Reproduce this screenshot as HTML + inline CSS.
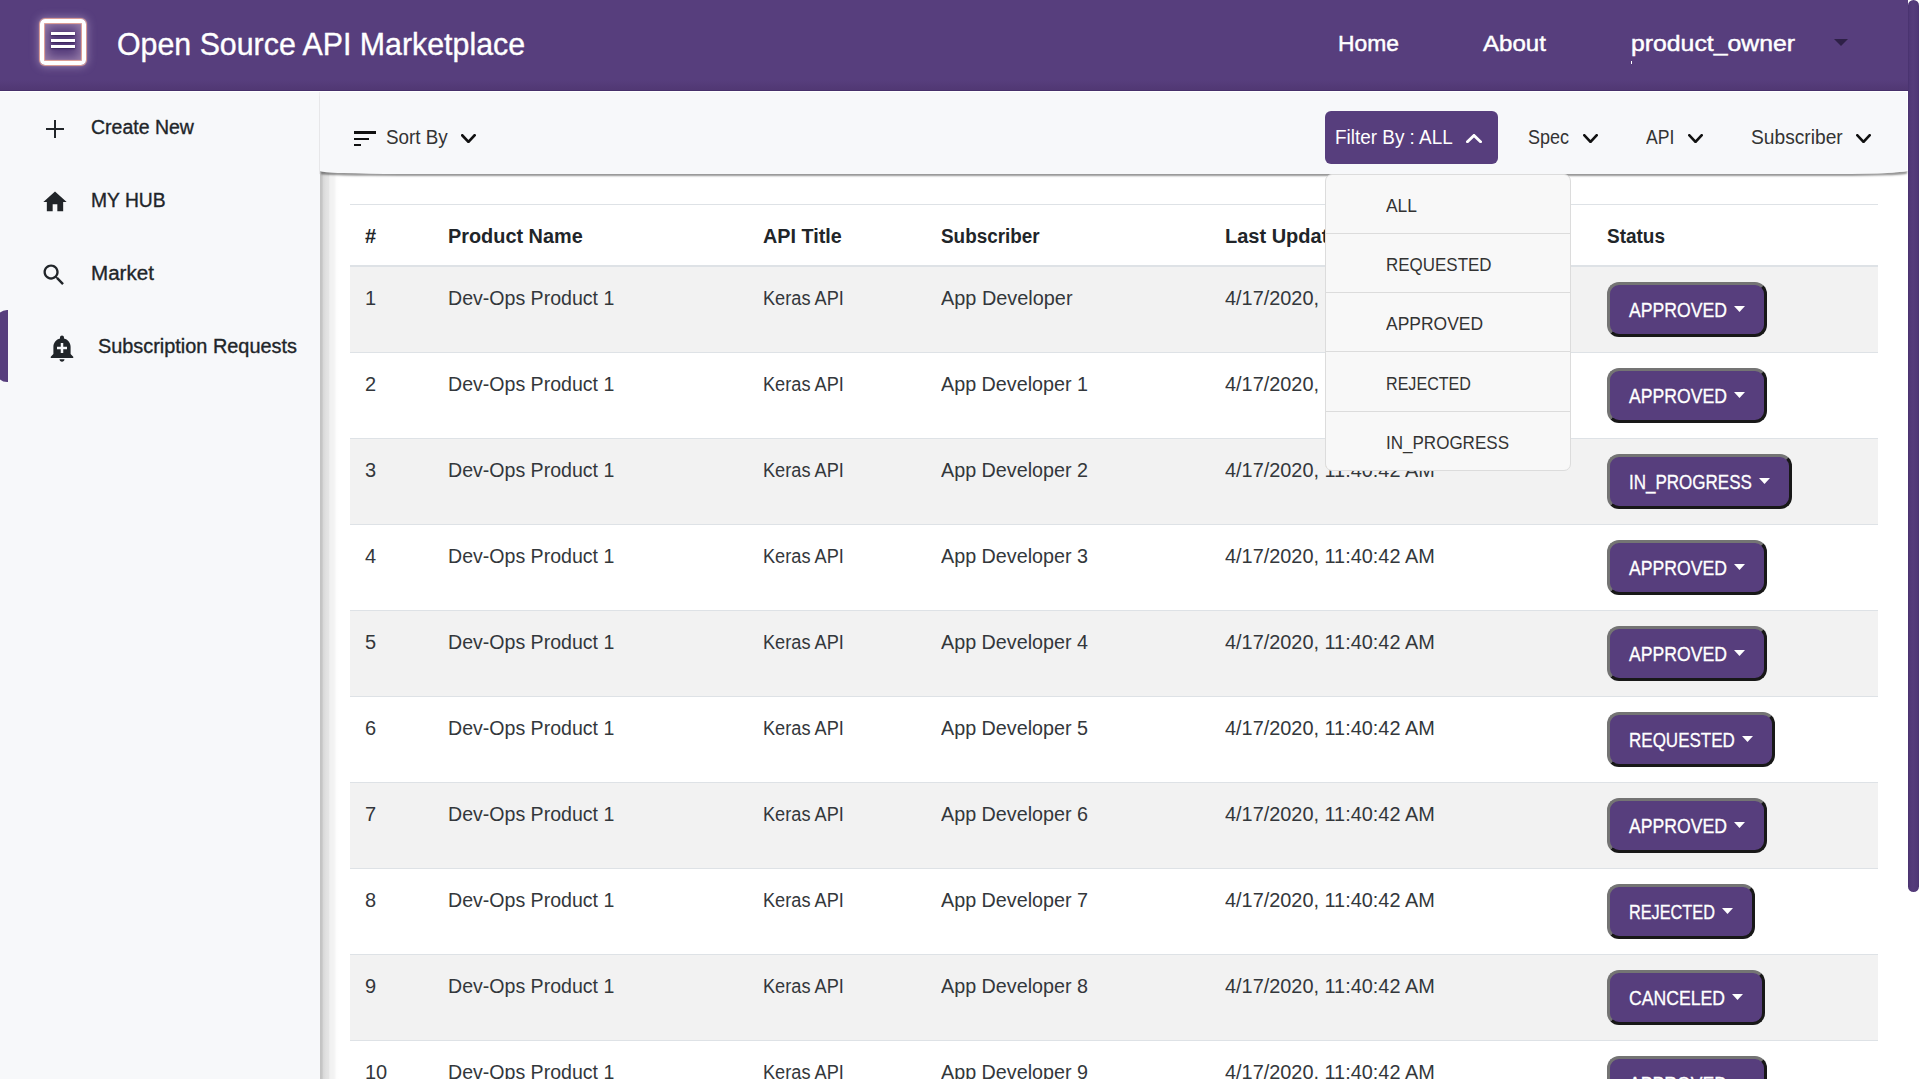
<!DOCTYPE html>
<html><head><meta charset="utf-8"><title>Subscription Requests</title>
<style>
html,body{margin:0;padding:0;width:1919px;height:1079px;overflow:hidden;background:#fff}
body{position:relative;font-family:"Liberation Sans",sans-serif}
.a{position:absolute;box-sizing:content-box}
.t{position:absolute;white-space:nowrap;font-family:"Liberation Sans",sans-serif}
.btn{background:#573e7d;border:3px solid;border-color:#747474 #181818 #181818 #747474;border-radius:12px}
</style></head><body>
<div class="a" style="left:0px;top:0px;width:1919px;height:1079px;background:#ffffff"></div>
<div class="a" style="left:0px;top:90px;width:320px;height:989px;background:#f7f8fa"></div>
<div class="a" style="left:319px;top:92px;width:1px;height:82px;background:#ececee"></div>
<div class="a" style="left:320px;top:90px;width:1588px;height:1040px;background:#fff"></div>
<div class="a" style="left:320px;top:170px;width:19px;height:960px;background:linear-gradient(to right,#c2c2c2 0,#c6c6c6 2px,#d9d9d9 3.5px,#e1e1e1 6px,#e4e4e4 8.5px,#f1f1f1 10px,#f3f3f3 14px,#fdfdfd 16.5px,#fff 19px)"></div>
<div class="a" style="left:320px;top:92px;width:1587px;height:82px;background:#f7f8fa;border-right:1px solid #fff;border-radius:0 0 70px 80px / 0 0 3.5px 3px;box-shadow:0 3px 2px -1px rgba(0,0,0,0.42)"></div>
<div class="a" style="left:0px;top:0px;width:1908px;height:90px;background:linear-gradient(to bottom,#573e7d 0,#573e7d 80px,#513874 89px)"></div>
<div class="a" style="left:0px;top:90px;width:1908px;height:1px;background:#46306a"></div>
<div class="a" style="left:0px;top:91px;width:1908px;height:1px;background:#fff"></div>
<div class="a" style="left:1908px;top:0px;width:11px;height:892px;background:linear-gradient(to right,#45306a 0,#4f3776 1px,#553c7b 5px,#4f3776 10px,#49336e 11px);border-radius:5.5px"></div>
<div class="a" style="left:40px;top:19px;width:38px;height:38px;border:4px solid #fff;border-radius:5px;box-shadow:0 0 1px 1px rgba(255,180,150,0.8),0 0 8px 2px rgba(235,220,250,0.35), inset 0 0 1px 1px rgba(255,180,150,0.8), inset 0 0 11px 3px rgba(240,210,230,0.45)"></div>
<div class="a" style="left:51px;top:32px;width:24px;height:3px;background:#fff;box-shadow:0 1px 2px rgba(40,20,70,0.7)"></div>
<div class="a" style="left:51px;top:38.5px;width:24px;height:3px;background:#fff;box-shadow:0 1px 2px rgba(40,20,70,0.7)"></div>
<div class="a" style="left:51px;top:45px;width:24px;height:3px;background:#fff;box-shadow:0 1px 2px rgba(40,20,70,0.7)"></div>
<div class="t" style="left:116.50px;top:28.54px;font-size:31.5px;line-height:31.5px;color:#fff;transform:scaleX(0.9630);transform-origin:0 0;-webkit-text-stroke:0.35px #fff;">Open Source API Marketplace</div>
<div class="t" style="left:1337.50px;top:32.85px;font-size:22.5px;line-height:22.5px;color:#fff;transform:scaleX(1.0154);transform-origin:0 0;-webkit-text-stroke:0.45px #fff;">Home</div>
<div class="t" style="left:1483.00px;top:32.85px;font-size:22.5px;line-height:22.5px;color:#fff;transform:scaleX(1.0707);transform-origin:0 0;-webkit-text-stroke:0.45px #fff;">About</div>
<div class="t" style="left:1631.00px;top:32.95px;font-size:22.5px;line-height:22.5px;color:#fff;transform:scaleX(1.1019);transform-origin:0 0;-webkit-text-stroke:0.45px #fff;">product_owner</div>
<div class="a" style="left:1631px;top:61px;width:1px;height:3px;background:#fff"></div>
<svg class="a" style="left:1834px;top:39px" width="14" height="7" viewBox="0 0 14 7"><path d="M0,0 L14,0 L7,7 Z" fill="#2e2047"/></svg>
<div class="a" style="left:54px;top:120px;width:2px;height:18px;background:#212529"></div>
<div class="a" style="left:46px;top:128px;width:18px;height:2px;background:#212529"></div>
<div class="t" style="left:90.80px;top:116.87px;font-size:20px;line-height:20px;color:#212529;transform:scaleX(0.9745);transform-origin:0 0;-webkit-text-stroke:0.35px #212529;">Create New</div>
<svg class="a" style="left:41px;top:188px" width="28" height="28" viewBox="0 0 24 24"><path d="M10 20v-6h4v6h5v-8h3L12 3 2 12h3v8z" fill="#212529"/></svg>
<div class="t" style="left:91.00px;top:189.77px;font-size:20px;line-height:20px;color:#212529;transform:scaleX(0.9638);transform-origin:0 0;-webkit-text-stroke:0.35px #212529;">MY HUB</div>
<svg class="a" style="left:40px;top:261px" width="28" height="28" viewBox="0 0 24 24"><path d="M15.5 14h-.79l-.28-.27C15.41 12.59 16 11.11 16 9.5 16 5.91 13.09 3 9.5 3S3 5.91 3 9.5 5.91 16 9.5 16c1.61 0 3.09-.59 4.23-1.57l.27.28v.79l5 4.99L20.49 19l-4.99-5zm-6 0C7.01 14 5 11.99 5 9.5S7.01 5 9.5 5 14 7.01 14 9.5 11.99 14 9.5 14z" fill="#212529"/></svg>
<div class="t" style="left:91.00px;top:263.07px;font-size:20px;line-height:20px;color:#212529;transform:scaleX(1.0295);transform-origin:0 0;-webkit-text-stroke:0.35px #212529;">Market</div>
<div class="a" style="left:-5px;top:310px;width:13px;height:72px;background:#573e7d;border-radius:12px 0 0 12px / 14px 0 0 14px"></div>
<svg class="a" style="left:47px;top:333px" width="30" height="30" viewBox="0 0 24 24"><path d="M10.01 21.01c0 1.1.89 1.99 1.99 1.99s1.99-.89 1.99-1.99h-3.98zM18.88 16.82V11c0-3.25-2.25-5.97-5.29-6.69v-.72C13.59 2.71 12.88 2 12 2s-1.59.71-1.59 1.59v.72C7.37 5.03 5.12 7.75 5.12 11v5.82L3 18.94V20h18v-1.06l-2.12-2.12zM16 13.01h-3v3h-2v-3H8V11h3V8h2v3h3v2.01z" fill="#212529"/></svg>
<div class="t" style="left:97.80px;top:336.07px;font-size:20px;line-height:20px;color:#212529;transform:scaleX(0.9940);transform-origin:0 0;-webkit-text-stroke:0.35px #212529;">Subscription Requests</div>
<div class="a" style="left:353.8px;top:131px;width:22.5px;height:2.8px;background:#111"></div>
<div class="a" style="left:353.8px;top:137.6px;width:15px;height:2.6px;background:#111"></div>
<div class="a" style="left:353.8px;top:143.6px;width:7.5px;height:2.8px;background:#111"></div>
<div class="t" style="left:385.70px;top:127.27px;font-size:20px;line-height:20px;color:#333;transform:scaleX(0.9421);transform-origin:0 0;">Sort By</div>
<svg class="a" style="left:460.8px;top:134.3px" width="14.90" height="9.20" viewBox="0 0 14.90 9.20"><path d="M1.35,1.35 L7.45,7.85 L13.55,1.35" fill="none" stroke="#111" stroke-width="2.7" stroke-linecap="square" stroke-linejoin="miter"/></svg>
<div class="a" style="left:1325px;top:111px;width:173px;height:53px;background:#573e7d;border-radius:6px"></div>
<div class="t" style="left:1335.00px;top:127.17px;font-size:20px;line-height:20px;color:#fff;transform:scaleX(0.9454);transform-origin:0 0;">Filter By : ALL</div>
<svg class="a" style="left:1465.5px;top:134px" width="16.00" height="9.20" viewBox="0 0 16.00 9.20"><path d="M1.40,7.80 L8.00,1.40 L14.60,7.80" fill="none" stroke="#fff" stroke-width="2.8" stroke-linecap="square" stroke-linejoin="miter"/></svg>
<div class="t" style="left:1528.30px;top:127.17px;font-size:20px;line-height:20px;color:#333;transform:scaleX(0.8991);transform-origin:0 0;">Spec</div>
<svg class="a" style="left:1583.3px;top:134.3px" width="15.00" height="9.20" viewBox="0 0 15.00 9.20"><path d="M1.35,1.35 L7.50,7.85 L13.65,1.35" fill="none" stroke="#111" stroke-width="2.7" stroke-linecap="square" stroke-linejoin="miter"/></svg>
<div class="t" style="left:1646.00px;top:127.17px;font-size:20px;line-height:20px;color:#333;transform:scaleX(0.8789);transform-origin:0 0;">API</div>
<svg class="a" style="left:1688.3px;top:134.3px" width="15.00" height="9.20" viewBox="0 0 15.00 9.20"><path d="M1.35,1.35 L7.50,7.85 L13.65,1.35" fill="none" stroke="#111" stroke-width="2.7" stroke-linecap="square" stroke-linejoin="miter"/></svg>
<div class="t" style="left:1751.00px;top:127.17px;font-size:20px;line-height:20px;color:#333;transform:scaleX(0.9592);transform-origin:0 0;">Subscriber</div>
<svg class="a" style="left:1856px;top:134.3px" width="15.00" height="9.20" viewBox="0 0 15.00 9.20"><path d="M1.35,1.35 L7.50,7.85 L13.65,1.35" fill="none" stroke="#111" stroke-width="2.7" stroke-linecap="square" stroke-linejoin="miter"/></svg>
<div class="a" style="left:350px;top:204px;width:1528px;height:1px;background:#dee2e6"></div>
<div class="t" style="left:365.00px;top:226.37px;font-size:20px;line-height:20px;color:#212529;font-weight:bold;">#</div>
<div class="t" style="left:447.60px;top:226.37px;font-size:20px;line-height:20px;color:#212529;font-weight:bold;transform:scaleX(0.9934);transform-origin:0 0;">Product Name</div>
<div class="t" style="left:762.60px;top:226.37px;font-size:20px;line-height:20px;color:#212529;font-weight:bold;transform:scaleX(0.9887);transform-origin:0 0;">API Title</div>
<div class="t" style="left:941.20px;top:226.37px;font-size:20px;line-height:20px;color:#212529;font-weight:bold;transform:scaleX(0.9445);transform-origin:0 0;">Subscriber</div>
<div class="t" style="left:1225.00px;top:226.37px;font-size:20px;line-height:20px;color:#212529;font-weight:bold;">Last Updated</div>
<div class="t" style="left:1607.00px;top:226.37px;font-size:20px;line-height:20px;color:#212529;font-weight:bold;transform:scaleX(0.9493);transform-origin:0 0;">Status</div>
<div class="a" style="left:350px;top:265px;width:1528px;height:2px;background:#dee2e6"></div>
<div class="a" style="left:350px;top:267px;width:1528px;height:85px;background:#f2f2f2"></div>
<div class="a" style="left:350px;top:352px;width:1528px;height:1px;background:#dee2e6"></div>
<div class="t" style="left:365.00px;top:288.07px;font-size:20px;line-height:20px;color:#33373b;">1</div>
<div class="t" style="left:447.60px;top:288.07px;font-size:20px;line-height:20px;color:#33373b;transform:scaleX(0.9782);transform-origin:0 0;">Dev-Ops Product 1</div>
<div class="t" style="left:762.60px;top:288.07px;font-size:20px;line-height:20px;color:#33373b;transform:scaleX(0.9089);transform-origin:0 0;">Keras API</div>
<div class="t" style="left:941.40px;top:288.07px;font-size:20px;line-height:20px;color:#33373b;transform:scaleX(0.9940);transform-origin:0 0;">App Developer</div>
<div class="t" style="left:1225.00px;top:288.07px;font-size:20px;line-height:20px;color:#33373b;transform:scaleX(0.9943);transform-origin:0 0;">4/17/2020, 11:40:42 AM</div>
<div class="a btn" style="left:1607px;top:282px;width:154px;height:49px"></div>
<div class="t" style="left:1629.40px;top:301.24px;font-size:19.8px;line-height:19.8px;color:#fff;transform:scaleX(0.8910);transform-origin:0 0;-webkit-text-stroke:0.3px #fff;">APPROVED</div>
<svg class="a" style="left:1733.5px;top:305.5px" width="11" height="6" viewBox="0 0 11 6"><path d="M0,0 L11,0 L5.5,6 Z" fill="#fff"/></svg>
<div class="a" style="left:350px;top:438px;width:1528px;height:1px;background:#dee2e6"></div>
<div class="t" style="left:365.00px;top:374.07px;font-size:20px;line-height:20px;color:#33373b;">2</div>
<div class="t" style="left:447.60px;top:374.07px;font-size:20px;line-height:20px;color:#33373b;transform:scaleX(0.9782);transform-origin:0 0;">Dev-Ops Product 1</div>
<div class="t" style="left:762.60px;top:374.07px;font-size:20px;line-height:20px;color:#33373b;transform:scaleX(0.9089);transform-origin:0 0;">Keras API</div>
<div class="t" style="left:941.40px;top:374.07px;font-size:20px;line-height:20px;color:#33373b;transform:scaleX(0.9872);transform-origin:0 0;">App Developer 1</div>
<div class="t" style="left:1225.00px;top:374.07px;font-size:20px;line-height:20px;color:#33373b;transform:scaleX(0.9943);transform-origin:0 0;">4/17/2020, 11:40:42 AM</div>
<div class="a btn" style="left:1607px;top:368px;width:154px;height:49px"></div>
<div class="t" style="left:1629.40px;top:387.24px;font-size:19.8px;line-height:19.8px;color:#fff;transform:scaleX(0.8910);transform-origin:0 0;-webkit-text-stroke:0.3px #fff;">APPROVED</div>
<svg class="a" style="left:1733.5px;top:391.5px" width="11" height="6" viewBox="0 0 11 6"><path d="M0,0 L11,0 L5.5,6 Z" fill="#fff"/></svg>
<div class="a" style="left:350px;top:439px;width:1528px;height:85px;background:#f2f2f2"></div>
<div class="a" style="left:350px;top:524px;width:1528px;height:1px;background:#dee2e6"></div>
<div class="t" style="left:365.00px;top:460.07px;font-size:20px;line-height:20px;color:#33373b;">3</div>
<div class="t" style="left:447.60px;top:460.07px;font-size:20px;line-height:20px;color:#33373b;transform:scaleX(0.9782);transform-origin:0 0;">Dev-Ops Product 1</div>
<div class="t" style="left:762.60px;top:460.07px;font-size:20px;line-height:20px;color:#33373b;transform:scaleX(0.9089);transform-origin:0 0;">Keras API</div>
<div class="t" style="left:941.40px;top:460.07px;font-size:20px;line-height:20px;color:#33373b;transform:scaleX(0.9872);transform-origin:0 0;">App Developer 2</div>
<div class="t" style="left:1225.00px;top:460.07px;font-size:20px;line-height:20px;color:#33373b;transform:scaleX(0.9943);transform-origin:0 0;">4/17/2020, 11:40:42 AM</div>
<div class="a btn" style="left:1607px;top:454px;width:179px;height:49px"></div>
<div class="t" style="left:1629.40px;top:473.24px;font-size:19.8px;line-height:19.8px;color:#fff;transform:scaleX(0.8598);transform-origin:0 0;-webkit-text-stroke:0.3px #fff;">IN_PROGRESS</div>
<svg class="a" style="left:1758.5px;top:477.5px" width="11" height="6" viewBox="0 0 11 6"><path d="M0,0 L11,0 L5.5,6 Z" fill="#fff"/></svg>
<div class="a" style="left:350px;top:610px;width:1528px;height:1px;background:#dee2e6"></div>
<div class="t" style="left:365.00px;top:546.07px;font-size:20px;line-height:20px;color:#33373b;">4</div>
<div class="t" style="left:447.60px;top:546.07px;font-size:20px;line-height:20px;color:#33373b;transform:scaleX(0.9782);transform-origin:0 0;">Dev-Ops Product 1</div>
<div class="t" style="left:762.60px;top:546.07px;font-size:20px;line-height:20px;color:#33373b;transform:scaleX(0.9089);transform-origin:0 0;">Keras API</div>
<div class="t" style="left:941.40px;top:546.07px;font-size:20px;line-height:20px;color:#33373b;transform:scaleX(0.9872);transform-origin:0 0;">App Developer 3</div>
<div class="t" style="left:1225.00px;top:546.07px;font-size:20px;line-height:20px;color:#33373b;transform:scaleX(0.9943);transform-origin:0 0;">4/17/2020, 11:40:42 AM</div>
<div class="a btn" style="left:1607px;top:540px;width:154px;height:49px"></div>
<div class="t" style="left:1629.40px;top:559.24px;font-size:19.8px;line-height:19.8px;color:#fff;transform:scaleX(0.8910);transform-origin:0 0;-webkit-text-stroke:0.3px #fff;">APPROVED</div>
<svg class="a" style="left:1733.5px;top:563.5px" width="11" height="6" viewBox="0 0 11 6"><path d="M0,0 L11,0 L5.5,6 Z" fill="#fff"/></svg>
<div class="a" style="left:350px;top:611px;width:1528px;height:85px;background:#f2f2f2"></div>
<div class="a" style="left:350px;top:696px;width:1528px;height:1px;background:#dee2e6"></div>
<div class="t" style="left:365.00px;top:632.07px;font-size:20px;line-height:20px;color:#33373b;">5</div>
<div class="t" style="left:447.60px;top:632.07px;font-size:20px;line-height:20px;color:#33373b;transform:scaleX(0.9782);transform-origin:0 0;">Dev-Ops Product 1</div>
<div class="t" style="left:762.60px;top:632.07px;font-size:20px;line-height:20px;color:#33373b;transform:scaleX(0.9089);transform-origin:0 0;">Keras API</div>
<div class="t" style="left:941.40px;top:632.07px;font-size:20px;line-height:20px;color:#33373b;transform:scaleX(0.9872);transform-origin:0 0;">App Developer 4</div>
<div class="t" style="left:1225.00px;top:632.07px;font-size:20px;line-height:20px;color:#33373b;transform:scaleX(0.9943);transform-origin:0 0;">4/17/2020, 11:40:42 AM</div>
<div class="a btn" style="left:1607px;top:626px;width:154px;height:49px"></div>
<div class="t" style="left:1629.40px;top:645.24px;font-size:19.8px;line-height:19.8px;color:#fff;transform:scaleX(0.8910);transform-origin:0 0;-webkit-text-stroke:0.3px #fff;">APPROVED</div>
<svg class="a" style="left:1733.5px;top:649.5px" width="11" height="6" viewBox="0 0 11 6"><path d="M0,0 L11,0 L5.5,6 Z" fill="#fff"/></svg>
<div class="a" style="left:350px;top:782px;width:1528px;height:1px;background:#dee2e6"></div>
<div class="t" style="left:365.00px;top:718.07px;font-size:20px;line-height:20px;color:#33373b;">6</div>
<div class="t" style="left:447.60px;top:718.07px;font-size:20px;line-height:20px;color:#33373b;transform:scaleX(0.9782);transform-origin:0 0;">Dev-Ops Product 1</div>
<div class="t" style="left:762.60px;top:718.07px;font-size:20px;line-height:20px;color:#33373b;transform:scaleX(0.9089);transform-origin:0 0;">Keras API</div>
<div class="t" style="left:941.40px;top:718.07px;font-size:20px;line-height:20px;color:#33373b;transform:scaleX(0.9872);transform-origin:0 0;">App Developer 5</div>
<div class="t" style="left:1225.00px;top:718.07px;font-size:20px;line-height:20px;color:#33373b;transform:scaleX(0.9943);transform-origin:0 0;">4/17/2020, 11:40:42 AM</div>
<div class="a btn" style="left:1607px;top:712px;width:162px;height:49px"></div>
<div class="t" style="left:1629.40px;top:731.24px;font-size:19.8px;line-height:19.8px;color:#fff;transform:scaleX(0.8600);transform-origin:0 0;-webkit-text-stroke:0.3px #fff;">REQUESTED</div>
<svg class="a" style="left:1741.5px;top:735.5px" width="11" height="6" viewBox="0 0 11 6"><path d="M0,0 L11,0 L5.5,6 Z" fill="#fff"/></svg>
<div class="a" style="left:350px;top:783px;width:1528px;height:85px;background:#f2f2f2"></div>
<div class="a" style="left:350px;top:868px;width:1528px;height:1px;background:#dee2e6"></div>
<div class="t" style="left:365.00px;top:804.07px;font-size:20px;line-height:20px;color:#33373b;">7</div>
<div class="t" style="left:447.60px;top:804.07px;font-size:20px;line-height:20px;color:#33373b;transform:scaleX(0.9782);transform-origin:0 0;">Dev-Ops Product 1</div>
<div class="t" style="left:762.60px;top:804.07px;font-size:20px;line-height:20px;color:#33373b;transform:scaleX(0.9089);transform-origin:0 0;">Keras API</div>
<div class="t" style="left:941.40px;top:804.07px;font-size:20px;line-height:20px;color:#33373b;transform:scaleX(0.9872);transform-origin:0 0;">App Developer 6</div>
<div class="t" style="left:1225.00px;top:804.07px;font-size:20px;line-height:20px;color:#33373b;transform:scaleX(0.9943);transform-origin:0 0;">4/17/2020, 11:40:42 AM</div>
<div class="a btn" style="left:1607px;top:798px;width:154px;height:49px"></div>
<div class="t" style="left:1629.40px;top:817.24px;font-size:19.8px;line-height:19.8px;color:#fff;transform:scaleX(0.8910);transform-origin:0 0;-webkit-text-stroke:0.3px #fff;">APPROVED</div>
<svg class="a" style="left:1733.5px;top:821.5px" width="11" height="6" viewBox="0 0 11 6"><path d="M0,0 L11,0 L5.5,6 Z" fill="#fff"/></svg>
<div class="a" style="left:350px;top:954px;width:1528px;height:1px;background:#dee2e6"></div>
<div class="t" style="left:365.00px;top:890.07px;font-size:20px;line-height:20px;color:#33373b;">8</div>
<div class="t" style="left:447.60px;top:890.07px;font-size:20px;line-height:20px;color:#33373b;transform:scaleX(0.9782);transform-origin:0 0;">Dev-Ops Product 1</div>
<div class="t" style="left:762.60px;top:890.07px;font-size:20px;line-height:20px;color:#33373b;transform:scaleX(0.9089);transform-origin:0 0;">Keras API</div>
<div class="t" style="left:941.40px;top:890.07px;font-size:20px;line-height:20px;color:#33373b;transform:scaleX(0.9872);transform-origin:0 0;">App Developer 7</div>
<div class="t" style="left:1225.00px;top:890.07px;font-size:20px;line-height:20px;color:#33373b;transform:scaleX(0.9943);transform-origin:0 0;">4/17/2020, 11:40:42 AM</div>
<div class="a btn" style="left:1607px;top:884px;width:142px;height:49px"></div>
<div class="t" style="left:1629.40px;top:903.24px;font-size:19.8px;line-height:19.8px;color:#fff;transform:scaleX(0.8226);transform-origin:0 0;-webkit-text-stroke:0.3px #fff;">REJECTED</div>
<svg class="a" style="left:1721.5px;top:907.5px" width="11" height="6" viewBox="0 0 11 6"><path d="M0,0 L11,0 L5.5,6 Z" fill="#fff"/></svg>
<div class="a" style="left:350px;top:955px;width:1528px;height:85px;background:#f2f2f2"></div>
<div class="a" style="left:350px;top:1040px;width:1528px;height:1px;background:#dee2e6"></div>
<div class="t" style="left:365.00px;top:976.07px;font-size:20px;line-height:20px;color:#33373b;">9</div>
<div class="t" style="left:447.60px;top:976.07px;font-size:20px;line-height:20px;color:#33373b;transform:scaleX(0.9782);transform-origin:0 0;">Dev-Ops Product 1</div>
<div class="t" style="left:762.60px;top:976.07px;font-size:20px;line-height:20px;color:#33373b;transform:scaleX(0.9089);transform-origin:0 0;">Keras API</div>
<div class="t" style="left:941.40px;top:976.07px;font-size:20px;line-height:20px;color:#33373b;transform:scaleX(0.9872);transform-origin:0 0;">App Developer 8</div>
<div class="t" style="left:1225.00px;top:976.07px;font-size:20px;line-height:20px;color:#33373b;transform:scaleX(0.9943);transform-origin:0 0;">4/17/2020, 11:40:42 AM</div>
<div class="a btn" style="left:1607px;top:970px;width:152px;height:49px"></div>
<div class="t" style="left:1629.40px;top:989.24px;font-size:19.8px;line-height:19.8px;color:#fff;transform:scaleX(0.8904);transform-origin:0 0;-webkit-text-stroke:0.3px #fff;">CANCELED</div>
<svg class="a" style="left:1731.5px;top:993.5px" width="11" height="6" viewBox="0 0 11 6"><path d="M0,0 L11,0 L5.5,6 Z" fill="#fff"/></svg>
<div class="a" style="left:350px;top:1126px;width:1528px;height:1px;background:#dee2e6"></div>
<div class="t" style="left:365.00px;top:1062.07px;font-size:20px;line-height:20px;color:#33373b;">10</div>
<div class="t" style="left:447.60px;top:1062.07px;font-size:20px;line-height:20px;color:#33373b;transform:scaleX(0.9782);transform-origin:0 0;">Dev-Ops Product 1</div>
<div class="t" style="left:762.60px;top:1062.07px;font-size:20px;line-height:20px;color:#33373b;transform:scaleX(0.9089);transform-origin:0 0;">Keras API</div>
<div class="t" style="left:941.40px;top:1062.07px;font-size:20px;line-height:20px;color:#33373b;transform:scaleX(0.9872);transform-origin:0 0;">App Developer 9</div>
<div class="t" style="left:1225.00px;top:1062.07px;font-size:20px;line-height:20px;color:#33373b;transform:scaleX(0.9943);transform-origin:0 0;">4/17/2020, 11:40:42 AM</div>
<div class="a btn" style="left:1607px;top:1056px;width:154px;height:49px"></div>
<div class="t" style="left:1629.40px;top:1075.24px;font-size:19.8px;line-height:19.8px;color:#fff;transform:scaleX(0.8910);transform-origin:0 0;-webkit-text-stroke:0.3px #fff;">APPROVED</div>
<svg class="a" style="left:1733.5px;top:1079.5px" width="11" height="6" viewBox="0 0 11 6"><path d="M0,0 L11,0 L5.5,6 Z" fill="#fff"/></svg>
<div class="a" style="left:1325px;top:174px;width:244px;height:295px;background:#f8f8f8;border:1px solid #dcdcdc;border-radius:7px"></div>
<div class="a" style="left:1326px;top:233px;width:244px;height:1px;background:#dcdcdc"></div>
<div class="a" style="left:1326px;top:292px;width:244px;height:1px;background:#dcdcdc"></div>
<div class="a" style="left:1326px;top:351px;width:244px;height:1px;background:#dcdcdc"></div>
<div class="a" style="left:1326px;top:411px;width:244px;height:1px;background:#dcdcdc"></div>
<div class="t" style="left:1386.30px;top:196.42px;font-size:19px;line-height:19px;color:#333;transform:scaleX(0.9166);transform-origin:0 0;">ALL</div>
<div class="t" style="left:1386.30px;top:255.42px;font-size:19px;line-height:19px;color:#333;transform:scaleX(0.8928);transform-origin:0 0;">REQUESTED</div>
<div class="t" style="left:1386.30px;top:314.42px;font-size:19px;line-height:19px;color:#333;transform:scaleX(0.9190);transform-origin:0 0;">APPROVED</div>
<div class="t" style="left:1386.30px;top:373.92px;font-size:19px;line-height:19px;color:#333;transform:scaleX(0.8473);transform-origin:0 0;">REJECTED</div>
<div class="t" style="left:1386.30px;top:433.42px;font-size:19px;line-height:19px;color:#333;transform:scaleX(0.8960);transform-origin:0 0;">IN_PROGRESS</div>
</body></html>
